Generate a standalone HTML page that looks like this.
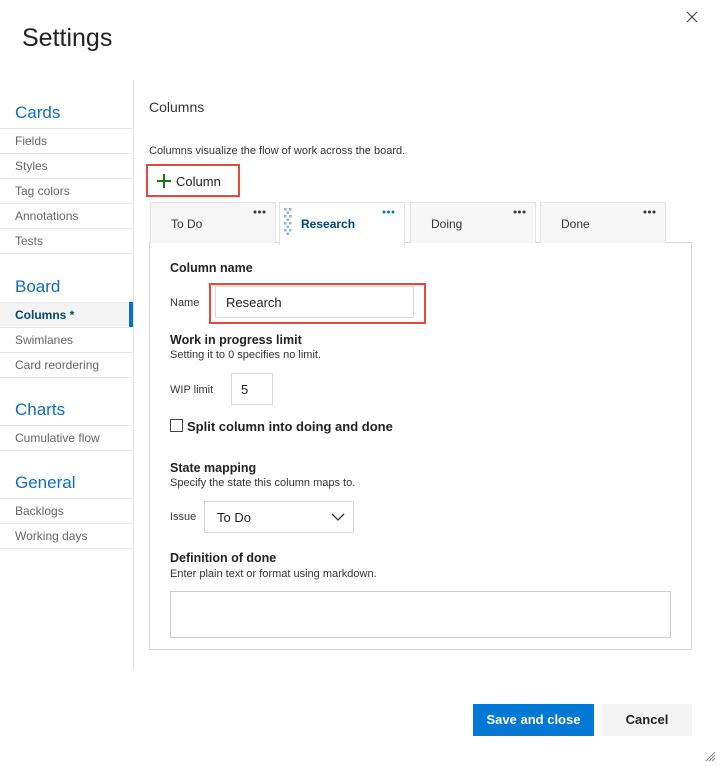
<!DOCTYPE html>
<html><head><style>
body{margin:0;width:720px;height:766px;background:#fff;font-family:"Liberation Sans",sans-serif;color:#333;position:relative;overflow:hidden}
.a{position:absolute;white-space:nowrap}
.h{font-size:17px;color:#106ebe}
.nav{position:absolute;left:0;width:132px;height:24px;border-top:1px solid #e8e8e8;font-size:12px;color:#666;line-height:24px;padding-left:15px;box-sizing:border-box}
.tab{position:absolute;top:202px;width:126px;height:41px;background:#f6f6f6;border:1px solid #e3e3e3;border-bottom:none;box-sizing:border-box;font-size:12px;line-height:42px;padding-left:20px}
.dots{position:absolute;right:9px;top:7px}
.b{font-size:12.5px;font-weight:bold;color:#222}
.s{font-size:11px;color:#333}
.box{position:absolute;border:1px solid #d8d8d8;background:#fff;box-sizing:border-box}
</style></head><body>
<div class="a" style="left:22px;top:24px;font-size:25px;color:#222">Settings</div>
<svg class="a" style="left:686px;top:11px" width="12" height="12"><path d="M1 1L11 11M11 1L1 11" stroke="#444" stroke-width="1.2"/></svg>
<div class="a" style="left:133px;top:80px;width:1px;height:590px;background:#e3e3e3"></div>

<div class="a h" style="left:15px;top:103px">Cards</div>
<div class="nav" style="top:128px">Fields</div>
<div class="nav" style="top:153px">Styles</div>
<div class="nav" style="top:178px">Tag colors</div>
<div class="nav" style="top:203px">Annotations</div>
<div class="nav" style="top:228px;border-bottom:1px solid #e8e8e8;height:26px">Tests</div>
<div class="a h" style="left:15px;top:277px">Board</div>
<div class="nav" style="top:302px;background:#f4f4f4;color:#004578;font-weight:bold">Columns *</div>
<div class="a" style="left:129px;top:302px;width:4px;height:25px;background:#106ebe"></div>
<div class="nav" style="top:327px">Swimlanes</div>
<div class="nav" style="top:352px;border-bottom:1px solid #e8e8e8;height:26px">Card reordering</div>
<div class="a h" style="left:15px;top:400px">Charts</div>
<div class="nav" style="top:425px;border-bottom:1px solid #e8e8e8;height:26px">Cumulative flow</div>
<div class="a h" style="left:15px;top:473px">General</div>
<div class="nav" style="top:498px">Backlogs</div>
<div class="nav" style="top:523px;border-bottom:1px solid #e8e8e8;height:26px">Working days</div>

<div class="a" style="left:149px;top:99px;font-size:14px;color:#333">Columns</div>
<div class="a s" style="left:149px;top:145px">Columns visualize the flow of work across the board.</div>
<div class="a" style="left:146px;top:164px;width:94px;height:33px;border:2px solid #e8483a;box-sizing:border-box"></div>
<svg class="a" style="left:157px;top:174px" width="14" height="14"><path d="M7 0V14M0 7H14" stroke="#107c10" stroke-width="2"/></svg>
<div class="a" style="left:176px;top:174px;font-size:13px;color:#222">Column</div>

<div class="box" style="left:149px;top:242px;width:543px;height:408px"></div>
<div class="tab" style="left:150px">To Do<svg class="dots" width="13" height="4"><g fill="#333"><circle cx="2" cy="2" r="1.5"/><circle cx="6.5" cy="2" r="1.5"/><circle cx="11" cy="2" r="1.5"/></g></svg></div>
<div class="tab" style="left:279px;background:#fff;height:43px;color:#004578;font-weight:bold;padding-left:21px">Research<svg class="dots" width="13" height="4"><g fill="#106ebe"><circle cx="2" cy="2" r="1.5"/><circle cx="6.5" cy="2" r="1.5"/><circle cx="11" cy="2" r="1.5"/></g></svg>
<svg style="position:absolute;left:4px;top:5px" width="10" height="28"><g fill="#8fb4d3"><rect x="0" y="0" width="2.5" height="2.5"/><rect x="5" y="0" width="2.5" height="2.5"/><rect x="2.5" y="3.5" width="2.5" height="2.5"/><rect x="0" y="7" width="2.5" height="2.5"/><rect x="5" y="7" width="2.5" height="2.5"/><rect x="2.5" y="10.5" width="2.5" height="2.5"/><rect x="0" y="14" width="2.5" height="2.5"/><rect x="5" y="14" width="2.5" height="2.5"/><rect x="2.5" y="17.5" width="2.5" height="2.5"/><rect x="0" y="21" width="2.5" height="2.5"/><rect x="5" y="21" width="2.5" height="2.5"/><rect x="2.5" y="24.5" width="2.5" height="2.5"/></g></svg></div>
<div class="tab" style="left:410px">Doing<svg class="dots" width="13" height="4"><g fill="#333"><circle cx="2" cy="2" r="1.5"/><circle cx="6.5" cy="2" r="1.5"/><circle cx="11" cy="2" r="1.5"/></g></svg></div>
<div class="tab" style="left:540px">Done<svg class="dots" width="13" height="4"><g fill="#333"><circle cx="2" cy="2" r="1.5"/><circle cx="6.5" cy="2" r="1.5"/><circle cx="11" cy="2" r="1.5"/></g></svg></div>

<div class="a b" style="left:170px;top:261px">Column name</div>
<div class="a s" style="left:170px;top:297px">Name</div>
<div class="a" style="left:209px;top:283px;width:217px;height:41px;border:2px solid #e8483a;box-sizing:border-box"></div>
<div class="box" style="left:215px;top:286px;width:199px;height:32px;font-size:13px;color:#222;line-height:32px;padding-left:10px">Research</div>
<div class="a b" style="left:170px;top:333px">Work in progress limit</div>
<div class="a s" style="left:170px;top:349px">Setting it to 0 specifies no limit.</div>
<div class="a s" style="left:170px;top:384px">WIP limit</div>
<div class="box" style="left:231px;top:373px;width:42px;height:32px;font-size:13px;line-height:32px;padding-left:9px;color:#222">5</div>
<div class="a" style="left:170px;top:419px;width:13px;height:13px;border:1px solid #444;box-sizing:border-box"></div>
<div class="a" style="left:187px;top:419px;font-size:13px;font-weight:bold;color:#222">Split column into doing and done</div>
<div class="a b" style="left:170px;top:461px">State mapping</div>
<div class="a s" style="left:170px;top:477px">Specify the state this column maps to.</div>
<div class="a s" style="left:170px;top:511px">Issue</div>
<div class="box" style="left:204px;top:501px;width:150px;height:32px;font-size:13px;line-height:32px;padding-left:12px;color:#222">To Do
<svg style="position:absolute;right:8px;top:11px" width="14" height="9"><path d="M1 1L7 7L13 1" fill="none" stroke="#333" stroke-width="1.3"/></svg></div>
<div class="a b" style="left:170px;top:551px">Definition of done</div>
<div class="a s" style="left:170px;top:568px">Enter plain text or format using markdown.</div>
<div class="box" style="left:170px;top:591px;width:501px;height:47px;border-color:#ccc"></div>

<div class="a" style="left:473px;top:704px;width:121px;height:32px;background:#0078d4;color:#fff;font-size:13px;font-weight:bold;text-align:center;line-height:32px">Save and close</div>
<div class="a" style="left:602px;top:704px;width:90px;height:32px;background:#f3f3f3;color:#222;font-size:13px;font-weight:bold;text-align:center;line-height:32px">Cancel</div>
<svg class="a" style="left:704px;top:750px" width="12" height="12"><path d="M2 11L11 2M5 11L11 5M8 11L11 8" stroke="#888" stroke-width="1"/></svg>
</body></html>
